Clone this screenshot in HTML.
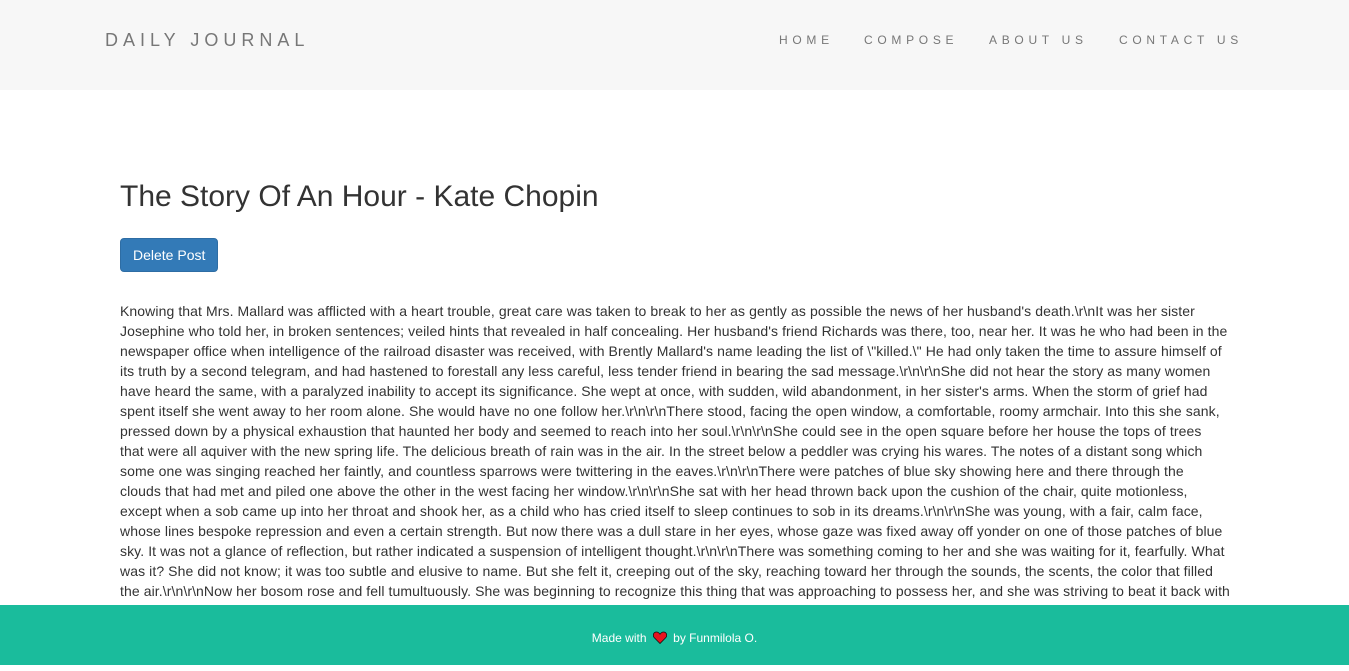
<!DOCTYPE html>
<html><head><meta charset="utf-8"><style>
body{margin:0;font-family:"Liberation Sans",Arial,sans-serif;font-size:14px;line-height:20px;color:#333;background:#fff;overflow:hidden;height:665px}
.nav{height:90px;background:#f7f7f7;position:relative}
.brand{position:absolute;left:105px;top:30px;font-size:18px;letter-spacing:5px;color:#777;line-height:20px}
.links{position:absolute;top:33px;left:0;font-size:12px;letter-spacing:4.7px;color:#777;line-height:14px}
.links span{position:absolute;white-space:nowrap}
.main{position:absolute;left:120px;top:171px;width:1220px}
h1{font-size:30px;font-weight:500;margin:0;line-height:52px;color:#333}
.btn{display:inline-block;margin-top:15px;background:#337ab7;border:1px solid #2e6da4;color:#fff;border-radius:4px;padding:6px 12px;font-size:14px;line-height:20px}
p{margin:29px 0 0;white-space:nowrap;letter-spacing:0.09px}
.foot{position:absolute;left:0;top:605px;width:1349px;height:60px;background:#1abc9c;color:#fff;font-size:12px;text-align:center;line-height:66px}
.foot svg{vertical-align:-2px;margin:0 3px}
</style></head><body>
<div class="nav"><div class="brand">DAILY JOURNAL</div>
<div class="links"><span style="left:779px">HOME</span><span style="left:864px">COMPOSE</span><span style="left:989px">ABOUT US</span><span style="left:1119px">CONTACT US</span></div></div>
<div class="main"><h1>The Story Of An Hour - Kate Chopin</h1>
<span class="btn">Delete Post</span>
<p>Knowing that Mrs. Mallard was afflicted with a heart trouble, great care was taken to break to her as gently as possible the news of her husband's death.\r\nIt was her sister<br>Josephine who told her, in broken sentences; veiled hints that revealed in half concealing. Her husband's friend Richards was there, too, near her. It was he who had been in the<br>newspaper office when intelligence of the railroad disaster was received, with Brently Mallard's name leading the list of \"killed.\" He had only taken the time to assure himself of<br>its truth by a second telegram, and had hastened to forestall any less careful, less tender friend in bearing the sad message.\r\n\r\nShe did not hear the story as many women<br>have heard the same, with a paralyzed inability to accept its significance. She wept at once, with sudden, wild abandonment, in her sister's arms. When the storm of grief had<br>spent itself she went away to her room alone. She would have no one follow her.\r\n\r\nThere stood, facing the open window, a comfortable, roomy armchair. Into this she sank,<br>pressed down by a physical exhaustion that haunted her body and seemed to reach into her soul.\r\n\r\nShe could see in the open square before her house the tops of trees<br>that were all aquiver with the new spring life. The delicious breath of rain was in the air. In the street below a peddler was crying his wares. The notes of a distant song which<br>some one was singing reached her faintly, and countless sparrows were twittering in the eaves.\r\n\r\nThere were patches of blue sky showing here and there through the<br>clouds that had met and piled one above the other in the west facing her window.\r\n\r\nShe sat with her head thrown back upon the cushion of the chair, quite motionless,<br>except when a sob came up into her throat and shook her, as a child who has cried itself to sleep continues to sob in its dreams.\r\n\r\nShe was young, with a fair, calm face,<br>whose lines bespoke repression and even a certain strength. But now there was a dull stare in her eyes, whose gaze was fixed away off yonder on one of those patches of blue<br>sky. It was not a glance of reflection, but rather indicated a suspension of intelligent thought.\r\n\r\nThere was something coming to her and she was waiting for it, fearfully. What<br>was it? She did not know; it was too subtle and elusive to name. But she felt it, creeping out of the sky, reaching toward her through the sounds, the scents, the color that filled<br>the air.\r\n\r\nNow her bosom rose and fell tumultuously. She was beginning to recognize this thing that was approaching to possess her, and she was striving to beat it back with<br>her will.</p></div>
<div class="foot">Made with <svg width="14" height="13" viewBox="0 0 14 13"><path d="M7 12.5 L1.2 6.6 C-0.6 4.6 0.4 1 3.5 1 C5.2 1 6.3 2.2 7 3.2 C7.7 2.2 8.8 1 10.5 1 C13.6 1 14.6 4.6 12.8 6.6 Z" fill="#e8141e" stroke="#111" stroke-width="0.8"/></svg> by Funmilola O.</div>
</body></html>
